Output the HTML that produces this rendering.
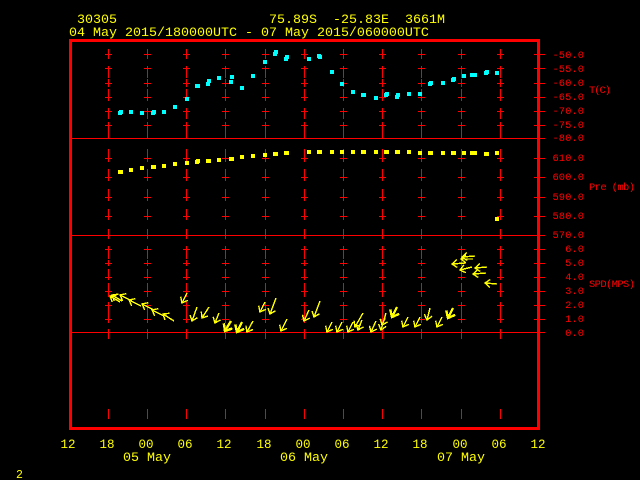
<!DOCTYPE html>
<html><head><meta charset="utf-8"><title>30305</title>
<style>
html,body{margin:0;padding:0;background:#000;width:640px;height:480px;overflow:hidden}
svg{display:block}
text{font-family:"Liberation Mono",monospace;white-space:pre}
.y{fill:#ff0;font-size:13.33px}
.a{fill:#ff0;font-size:12.5px;text-anchor:middle}
.r{fill:#f00;font-size:10.5px;text-anchor:end}
.l{fill:#f00;font-size:10.5px}
.c rect{fill:#0ff}
.p rect{fill:#ff0}
</style></head><body>
<svg width="640" height="480" viewBox="0 0 640 480" xmlns="http://www.w3.org/2000/svg">
<defs>
<marker id="m" markerUnits="userSpaceOnUse" markerWidth="14" markerHeight="14" refX="0" refY="0" orient="auto" overflow="visible"><path d="M5,-4L0,0L5,4" fill="none" stroke="#ff0" stroke-width="1.4" shape-rendering="crispEdges"/></marker>
<marker id="t" markerUnits="userSpaceOnUse" markerWidth="14" markerHeight="14" refX="0" refY="0" orient="auto" overflow="visible"><path d="M6,-5L0,0L6,5" fill="none" stroke="#ff0" stroke-width="2.4" shape-rendering="crispEdges"/></marker>
<path id="col" fill="none" stroke="#f00" stroke-width="1" shape-rendering="crispEdges" d="M.5,49V59M.5,66V78M.5,79V87M.5,89V101M.5,108V119M.5,122V138M.5,149V162M.5,169V181M.5,189V201M.5,209V220M.5,229V239M.5,246V259M.5,260V266M.5,269V280M.5,283V297M.5,302V323M.5,329V339M.5,409V419M-3,54.5H4M-3,68.5H4M-3,83.5H4M-3,97.5H4M-3,111.5H4M-3,125.5H4M-3,158.5H4M-3,177.5H4M-3,197.5H4M-3,216.5H4M-3,249.5H4M-3,263.5H4M-3,277.5H4M-3,291.5H4M-3,305.5H4M-3,319.5H4"/>
</defs>
<rect width="640" height="480" fill="#000"/>

<use href="#col" x="108"/><use href="#col" x="147"/><use href="#col" x="186"/><use href="#col" x="225"/><use href="#col" x="265"/><use href="#col" x="304"/><use href="#col" x="343"/><use href="#col" x="382"/><use href="#col" x="421"/><use href="#col" x="461"/><use href="#col" x="500"/>

<g fill="none" stroke="#f00" shape-rendering="crispEdges">
<path d="M72,138.5H545M72,235.5H545M72,332.5H545"/>
<path d="M534,54.5H545M534,68.5H545M534,83.5H545M534,97.5H545M534,111.5H545M534,125.5H545M534,158.5H545M534,177.5H545M534,197.5H545M534,216.5H545M534,249.5H545M534,263.5H545M534,277.5H545M534,291.5H545M534,305.5H545M534,319.5H545"/>
<rect x="70.5" y="40.5" width="468" height="388" stroke-width="3"/>
</g>

<g class="c" shape-rendering="crispEdges">
<rect x="118" y="111" width="4" height="4"/><rect x="119" y="110" width="4" height="4"/><rect x="129" y="110" width="4" height="4"/><rect x="140" y="111" width="4" height="4"/><rect x="151" y="111" width="4" height="4"/><rect x="152" y="110" width="4" height="4"/><rect x="162" y="110" width="4" height="4"/><rect x="173" y="105" width="4" height="4"/><rect x="185" y="97" width="4" height="4"/><rect x="195" y="84" width="5" height="4"/><rect x="196" y="84" width="4" height="4"/><rect x="206" y="82" width="4" height="4"/><rect x="207" y="79" width="4" height="4"/><rect x="217" y="76" width="4" height="4"/><rect x="229" y="80" width="4" height="4"/><rect x="230" y="75" width="4" height="4"/><rect x="240" y="86" width="4" height="4"/><rect x="251" y="74" width="4" height="4"/><rect x="263" y="60" width="4" height="4"/><rect x="273" y="52" width="4" height="4"/><rect x="274" y="50" width="4" height="4"/><rect x="284" y="57" width="4" height="4"/><rect x="285" y="55" width="4" height="4"/><rect x="307" y="57" width="4" height="4"/><rect x="317" y="54" width="4" height="4"/><rect x="318" y="55" width="4" height="4"/><rect x="330" y="70" width="4" height="4"/><rect x="340" y="82" width="4" height="4"/><rect x="351" y="90" width="4" height="4"/><rect x="361" y="93" width="5" height="4"/><rect x="374" y="96" width="4" height="4"/><rect x="384" y="93" width="4" height="4"/><rect x="385" y="92" width="4" height="4"/><rect x="395" y="95" width="4" height="4"/><rect x="396" y="93" width="4" height="4"/><rect x="407" y="92" width="4" height="4"/><rect x="418" y="92" width="4" height="4"/><rect x="428" y="82" width="4" height="4"/><rect x="429" y="81" width="4" height="4"/><rect x="441" y="81" width="4" height="4"/><rect x="451" y="78" width="4" height="4"/><rect x="452" y="77" width="4" height="4"/><rect x="462" y="74" width="4" height="4"/><rect x="470" y="73" width="7" height="4"/><rect x="484" y="71" width="4" height="4"/><rect x="485" y="70" width="4" height="4"/><rect x="495" y="71" width="4" height="4"/>
</g>

<g class="p" shape-rendering="crispEdges">
<rect x="118" y="170" width="5" height="4"/><rect x="129" y="168" width="4" height="4"/><rect x="140" y="166" width="4" height="4"/><rect x="151" y="165" width="5" height="4"/><rect x="162" y="164" width="4" height="4"/><rect x="173" y="162" width="4" height="4"/><rect x="185" y="161" width="4" height="4"/><rect x="195" y="160" width="4" height="4"/><rect x="196" y="159" width="4" height="4"/><rect x="206" y="159" width="5" height="4"/><rect x="217" y="158" width="4" height="4"/><rect x="229" y="157" width="5" height="4"/><rect x="240" y="155" width="4" height="4"/><rect x="251" y="154" width="4" height="4"/><rect x="263" y="153" width="4" height="4"/><rect x="273" y="152" width="5" height="4"/><rect x="284" y="151" width="5" height="4"/><rect x="307" y="150" width="4" height="4"/><rect x="317" y="150" width="5" height="4"/><rect x="330" y="150" width="4" height="4"/><rect x="340" y="150" width="4" height="4"/><rect x="351" y="150" width="4" height="4"/><rect x="361" y="150" width="5" height="4"/><rect x="374" y="150" width="4" height="4"/><rect x="384" y="150" width="5" height="4"/><rect x="395" y="150" width="5" height="4"/><rect x="407" y="150" width="4" height="4"/><rect x="418" y="151" width="4" height="4"/><rect x="428" y="151" width="5" height="4"/><rect x="441" y="151" width="4" height="4"/><rect x="451" y="151" width="5" height="4"/><rect x="462" y="151" width="4" height="4"/><rect x="470" y="151" width="7" height="4"/><rect x="484" y="152" width="5" height="4"/><rect x="495" y="151" width="4" height="4"/><rect x="495" y="217" width="4" height="4"/>
</g>

<g fill="none" stroke="#ff0" stroke-width="1.4" shape-rendering="crispEdges" marker-start="url(#m)">
<path d="M110,296L120,302"/><path d="M112,295L122,301"/><path d="M120,295L132,301"/><path d="M129,300L141,306"/><path d="M142,304L154,310"/><path d="M152,310L164,316"/><path d="M163,314L174,321"/>
<path d="M182,303L187,293"/><path d="M192,321L197,307"/><path d="M202,318L209,307"/>
<path d="M215,323L219,313"/><path d="M247,332L253,321"/><path d="M260,312L265,302"/><path d="M270,314L276,298"/><path d="M281,331L287,319"/><path d="M304,321L309,310"/><path d="M314,317L320,301"/>
<path d="M327,332L332,322"/><path d="M337,332L342,322"/><path d="M348,332L353,322"/><path d="M355,327L363,313"/><path d="M358,330L362,320"/><path d="M371,332L376,321"/><path d="M381,330L386,313"/><path d="M382,325L385,318"/><path d="M403,327L408,317"/><path d="M415,327L420,317"/><path d="M427,320L430,308"/><path d="M437,327L442,317"/>
<path d="M462,257L475,256"/><path d="M461,259L473,259"/><path d="M452,264L465,263"/><path d="M460,270L472,267"/><path d="M475,268L487,267"/><path d="M473,274L486,273"/><path d="M485,283L497,284"/>
</g>
<g fill="none" stroke="#ff0" stroke-width="2.4" shape-rendering="crispEdges" marker-start="url(#t)">
<path d="M225,331L231,321"/><path d="M237,332L242,322"/><path d="M392,317L397,307"/><path d="M448,318L453,308"/>
</g>

<text class="y" x="77" y="23">30305</text>
<text class="y" x="269" y="23">75.89S  -25.83E  3661M</text>
<text class="y" x="69" y="36">04 May 2015/180000UTC - 07 May 2015/060000UTC</text>

<text class="a" x="68" y="448">12</text><text class="a" x="107" y="448">18</text><text class="a" x="146" y="448">00</text><text class="a" x="185" y="448">06</text><text class="a" x="224" y="448">12</text><text class="a" x="264" y="448">18</text><text class="a" x="303" y="448">00</text><text class="a" x="342" y="448">06</text><text class="a" x="381" y="448">12</text><text class="a" x="420" y="448">18</text><text class="a" x="460" y="448">00</text><text class="a" x="499" y="448">06</text><text class="a" x="538" y="448">12</text>
<text class="y" x="123" y="461">05 May</text>
<text class="y" x="280" y="461">06 May</text>
<text class="y" x="437" y="461">07 May</text>
<text class="y" x="16" y="478" style="font-size:11.5px">2</text>

<text class="r" x="584" y="58">-50.0</text><text class="r" x="584" y="72">-55.0</text><text class="r" x="584" y="86">-60.0</text><text class="r" x="584" y="100">-65.0</text><text class="r" x="584" y="114">-70.0</text><text class="r" x="584" y="128">-75.0</text><text class="r" x="584" y="141">-80.0</text>
<text class="r" x="584" y="161">610.0</text><text class="r" x="584" y="180">600.0</text><text class="r" x="584" y="200">590.0</text><text class="r" x="584" y="219">580.0</text><text class="r" x="584" y="238">570.0</text>
<text class="r" x="584" y="252">6.0</text><text class="r" x="584" y="266">5.0</text><text class="r" x="584" y="280">4.0</text><text class="r" x="584" y="294">3.0</text><text class="r" x="584" y="308">2.0</text><text class="r" x="584" y="322">1.0</text><text class="r" x="584" y="336">0.0</text>
<text class="l" x="589" y="93" textLength="22">T(C)</text>
<text class="l" x="589" y="190" textLength="46">Pre (mb)</text>
<text class="l" x="589" y="287" textLength="46">SPD(MPS)</text>
</svg>
</body></html>
